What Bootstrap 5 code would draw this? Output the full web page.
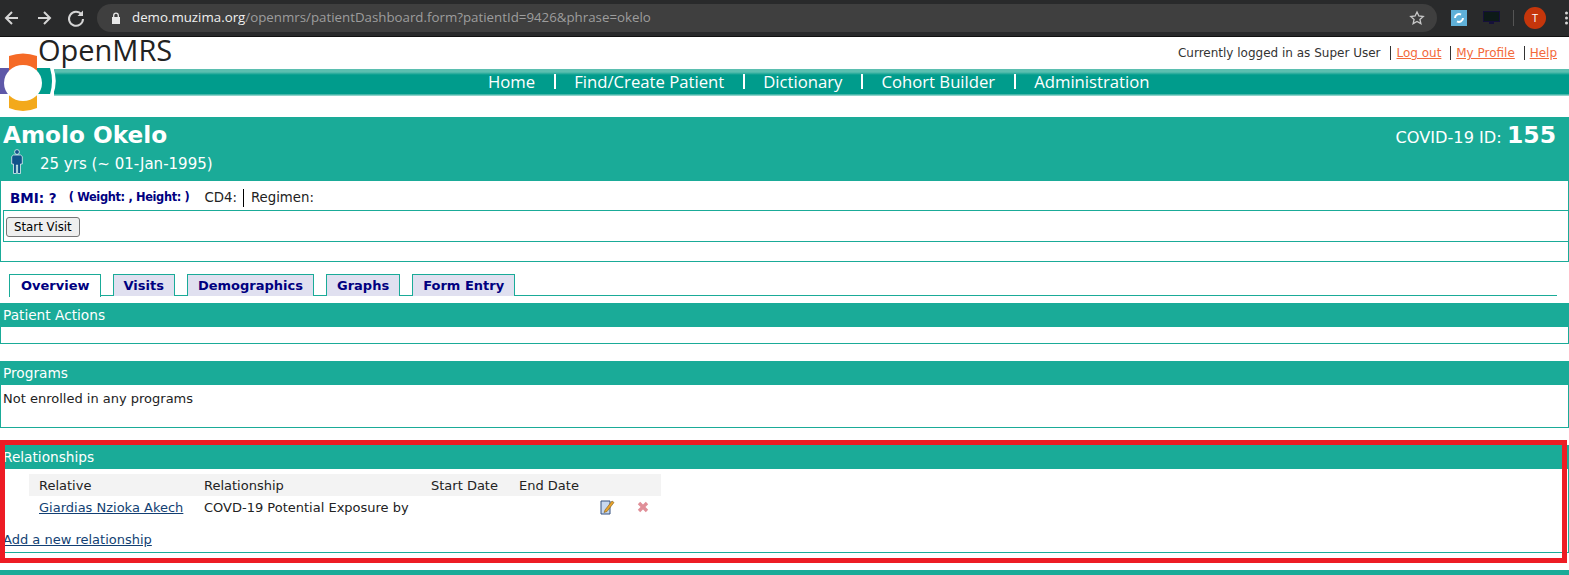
<!DOCTYPE html>
<html lang="en"><head><meta charset="utf-8"><title>OpenMRS</title>
<link href="https://cdn.jsdelivr.net/npm/bootstrap@5.3.0/dist/css/bootstrap.min.css" rel="stylesheet">
<style>
html,body{height:575px;overflow:hidden}
body{font-family:"DejaVu Sans",Verdana,sans-serif;font-size:13px;color:#222;background:#fff;position:relative;line-height:1.2}
.chrome-bar{height:37px;background:#292a2b;border-bottom:1px solid #111;padding:4px 0}
.nav-ico{width:20px;height:20px;color:#d5d5d5;flex:none;margin-left:12px}
.nav-ico.first-ico{margin-left:2px}
.addr-pill{height:28px;background:#3f3f3f;border-radius:14px;margin-left:11px;width:1340px;padding:0 12px 0 14px;font-family:"Open Sans","Noto Sans",sans-serif;font-size:13.3px;color:#9d9d9d;flex:none}
.addr-pill b{font-weight:500;color:#f0f0f0}
.lock-ico{margin-right:11px}
.ext-one{margin-left:14px;flex:none}
.ext-two{margin-left:16px;flex:none}
.bar-rule{width:1px;height:16px;background:#555;margin-left:13px;flex:none}
.avatar{width:22px;height:22px;border-radius:50%;background:#c5360b;color:#fff;font-size:11px;font-family:"Open Sans",sans-serif;margin-left:10px;flex:none}
.more-dots{margin-left:19px;flex:none}
.top-strip{height:32px;padding-left:38px;position:relative}
.logo-word{font-family:"Open Sans","Noto Sans",sans-serif;font-size:29px;line-height:29px;color:#222;margin-top:-2px}
.user-line{font-size:12px;padding:9px 12px 0 0;color:#333}
.user-line a{color:#f3693a;margin-left:5px;padding-left:5px;border-left:1px solid #333}
.user-line span{margin-right:5px}
.main-nav{height:27px;background:linear-gradient(#5bbfb0 0,#5bbfb0 3px,#009c8c 6px,#009c8c 25px,#8fd3ca 26px);margin-left:54px;padding:0 0 2px 431px;font-family:"Open Sans","Noto Sans",sans-serif;font-size:16.7px;color:#fff}
.main-nav span{padding:0 18.5px;border-left:2px solid #fff;line-height:15px}
.main-nav span:first-child{border-left:0;padding-left:3px}
.logo-mark{position:absolute;left:0;top:50px;width:60px;height:65px}
.pat-head{margin-top:21px;height:64px;background:#1aab98;color:#fff;padding:4px 0 0 3px}
.pat-name{font-size:23.200px;font-weight:700;line-height:28px}
.pat-age{font-size:15px;margin-top:0}
.man-ico{width:14px;height:25px;margin:0 16px 0 7px}
.covid-id{font-size:16.200px;padding:0 13px 0 0}
.covid-id b{font-size:23.500px}
.pat-box{height:81px;border:1px solid #1aab98;border-top:0;padding-top:5px}
.bmi-line{padding-left:9px;height:24px;font-size:13.300px}
.bmi-line .bmi-val{color:#000080;font-size:13.500px}
.bmi-line .bmi-sub{color:#000080;font-size:11.400px;letter-spacing:-.35px;margin-left:12px}
.bmi-line .cd4{border-right:1px solid #000;padding:1px 6px 1px 0;margin:0 7px 0 15px}
.visit-box{border:1px solid #1aab98;margin:0 -1px 0 2px;height:32px;padding:6px 2px 0}
.plain-btn{font-size:11.800px;padding:0 7px;height:20px;background:#efefef;border:1px solid #767676;border-radius:3px;color:#000;line-height:18px}
.tab-row{margin-top:12px;height:22px;margin-left:9px;margin-right:12px;border-bottom:1px solid #1aab98;gap:12px}
.tab-item{height:22px;background:#e0e0f0;color:#000080;font-weight:700;font-size:13px;border:1px solid #1aab98;border-bottom:0;padding:3px 10px 0;line-height:15px}
.tab-item.on{background:#fff;height:23px;padding-left:11px}
.sect-title{height:24px;background:#1aab98;color:#fff;padding:3px;font-size:13.7px;line-height:18px}
.sect-body{border:1px solid #1aab98;border-top:0;padding:6px 2px}
.sect-one{margin-top:7px}.sect-one .sect-body{height:17px;padding:0}
.sect-two{margin-top:17px}.sect-two .sect-body{height:43px}
.sect-three{margin-top:17px}.sect-three .sect-body{height:84px;padding:5px 0 0 2px}
.rel-table{width:632px;margin-left:26px;border-collapse:collapse;font-size:13px;table-layout:fixed}
.rel-table th{background:#f3f3f3;font-weight:400;height:22px;padding:1px 0 0 10px}
.rel-table td{height:23px;padding:0 0 0 10px;white-space:nowrap}
.rel-table .c-a{width:165px}.rel-table .c-b{width:227px}.rel-table .c-c{width:88px}.rel-table .c-d{width:80px}.rel-table .c-e{width:37px}
.rel-table a,.add-link{color:#123f73}
.rel-table td svg{display:block;margin:-1px 0 0 1px}
.add-link{display:block;margin-top:13px;font-size:13px}
.sect-four{margin-top:17px;height:24px;background:#1aab98}
.red-frame{position:absolute;left:0;top:440px;width:1567px;height:123px;border:5px solid #ed1c24;pointer-events:none}
</style></head>
<body>
<div class="chrome-bar d-flex align-items-center">
  <svg class="nav-ico first-ico" viewBox="0 0 20 20" fill="none" stroke="currentColor" stroke-width="2"><path d="M16 10H4M10 4l-6 6 6 6"/></svg>
  <svg class="nav-ico" viewBox="0 0 20 20" fill="none" stroke="currentColor" stroke-width="2"><path d="M4 10h12M10 4l6 6-6 6"/></svg>
  <svg class="nav-ico" viewBox="0 0 20 20" fill="none" stroke="currentColor" stroke-width="2"><path d="M15.500 6.500A7 7 0 1 0 17 11"/><path d="M17 2.500v5.500h-5.500z" fill="currentColor" stroke="none"/></svg>
  <div class="addr-pill d-flex align-items-center">
    <svg width="10" height="13" viewBox="0 0 10 13" class="lock-ico" fill="#e8e8e8"><path d="M1 5h8v7H1z"/><path d="M2.700 5V3.500a2.300 2.300 0 0 1 4.600 0V5" fill="none" stroke="#e8e8e8" stroke-width="1.300"/></svg>
    <span><b>demo.muzima.org</b>/openmrs/patientDashboard.form?patientId=9426&amp;phrase=okelo</span>
    <svg class="ms-auto" width="16" height="16" viewBox="0 0 24 24" fill="none" stroke="#c8c8c8" stroke-width="2"><path d="M12 3l2.800 6 6.500.7-4.900 4.400 1.400 6.400L12 17.200 6.200 20.500l1.400-6.400L2.700 9.700 9.200 9z"/></svg>
  </div>
  <svg class="ext-one" width="16" height="16" viewBox="0 0 16 16"><rect width="16" height="16" fill="#5fb0d8"/><path d="M4 8a4 4 0 0 1 6-3.400M12 8a4 4 0 0 1-6 3.400" fill="none" stroke="#fff" stroke-width="2"/></svg>
  <svg class="ext-two" width="17" height="14" viewBox="0 0 17 14"><rect x="0.500" y="0.500" width="16" height="10" fill="#0d1a18" stroke="#15103a"/><path d="M6 11h5v2H6z" fill="#15103a"/></svg>
  <div class="bar-rule"></div>
  <div class="avatar d-flex align-items-center justify-content-center">T</div>
  <svg class="more-dots" width="3" height="14" viewBox="0 0 3 14" fill="#d5d5d5"><circle cx="1.500" cy="2" r="1.500"/><circle cx="1.500" cy="7" r="1.500"/><circle cx="1.500" cy="12" r="1.500"/></svg>
</div>
<div class="top-strip d-flex justify-content-between">
  <div class="logo-word">OpenMRS</div>
  <div class="user-line"><span>Currently logged in as Super User</span><a href="#">Log out</a> <a href="#">My Profile</a> <a href="#">Help</a></div>
</div>
<div class="main-nav d-flex align-items-center">
  <span>Home</span><span>Find/Create Patient</span><span>Dictionary</span><span>Cohort Builder</span><span>Administration</span>
</div>
<svg class="logo-mark" viewBox="0 0 60 65" aria-hidden="true">
  <rect x="0" y="18" width="12" height="26" fill="#5e58a8"/>
  <path d="M30 18h20q4 13 0 26H30z" fill="#009c8c"/>
  <path d="M9 6q14-5 28 0v16H9z" fill="#f56a26"/>
  <path d="M9 40h28v18q-14 6-28 0z" fill="#f3a91b"/>
  <ellipse cx="23" cy="33" rx="19" ry="18" fill="#fff"/>
  <path d="M52 18q5 13 0 26" fill="none" stroke="#fff" stroke-width="2.500"/>
</svg>
<div class="pat-head d-flex justify-content-between">
  <div>
    <div class="pat-name">Amolo Okelo</div>
    <div class="pat-age d-flex align-items-center">
      <svg class="man-ico" viewBox="0 0 14 25"><circle cx="7" cy="3" r="2.400" fill="#10528a" stroke="#fff" stroke-width=".7"/><path d="M3.500 6h7l1.800 1.500v7.500h-1.800v9.500H7.600V16H6.400v8.500H3.500V15H1.700V7.500z" fill="#10528a" stroke="#fff" stroke-width=".7"/></svg>
      <span class="pt-1">25 yrs (~ 01-Jan-1995)</span>
    </div>
  </div>
  <div class="covid-id">COVID-19 ID: <b>155</b></div>
</div>
<div class="pat-box">
  <div class="bmi-line d-flex align-items-center">
    <b class="bmi-val">BMI: ?</b><b class="bmi-sub">( Weight: , Height: )</b><span class="cd4">CD4:</span><span>Regimen:</span>
  </div>
  <div class="visit-box"><button type="button" class="plain-btn d-block">Start Visit</button></div>
</div>
<div class="tab-row d-flex">
  <div class="tab-item on">Overview</div><div class="tab-item">Visits</div><div class="tab-item">Demographics</div><div class="tab-item">Graphs</div><div class="tab-item">Form Entry</div>
</div>
<section class="sect-one"><div class="sect-title">Patient Actions</div><div class="sect-body"></div></section>
<section class="sect-two"><div class="sect-title">Programs</div><div class="sect-body">Not enrolled in any programs</div></section>
<section class="sect-three"><div class="sect-title">Relationships</div>
  <div class="sect-body">
    <table class="rel-table">
      <tr><th class="c-a">Relative</th><th class="c-b">Relationship</th><th class="c-c">Start Date</th><th class="c-d">End Date</th><th class="c-e"></th><th></th></tr>
      <tr><td><a href="#">Giardias Nzioka Akech</a></td><td>COVD-19 Potential Exposure by</td><td></td><td></td>
        <td><svg width="15" height="16" viewBox="0 0 15 16"><path d="M1 2h9v13H1z" fill="#c8d8f0" stroke="#35507f"/><path d="M5 11l7-9 2 1.500-7 9-3 1z" fill="#e9a32b" stroke="#7a5a18" stroke-width=".6"/></svg></td>
        <td><svg width="12" height="12" viewBox="0 0 12 12"><path d="M2 2l8 8M10 2l-8 8" stroke="#e08f98" stroke-width="3.400"/></svg></td></tr>
    </table>
    <a href="#" class="add-link">Add a new relationship</a>
  </div>
</section>
<div class="sect-four"></div>
<div class="red-frame"></div>
</body></html>
